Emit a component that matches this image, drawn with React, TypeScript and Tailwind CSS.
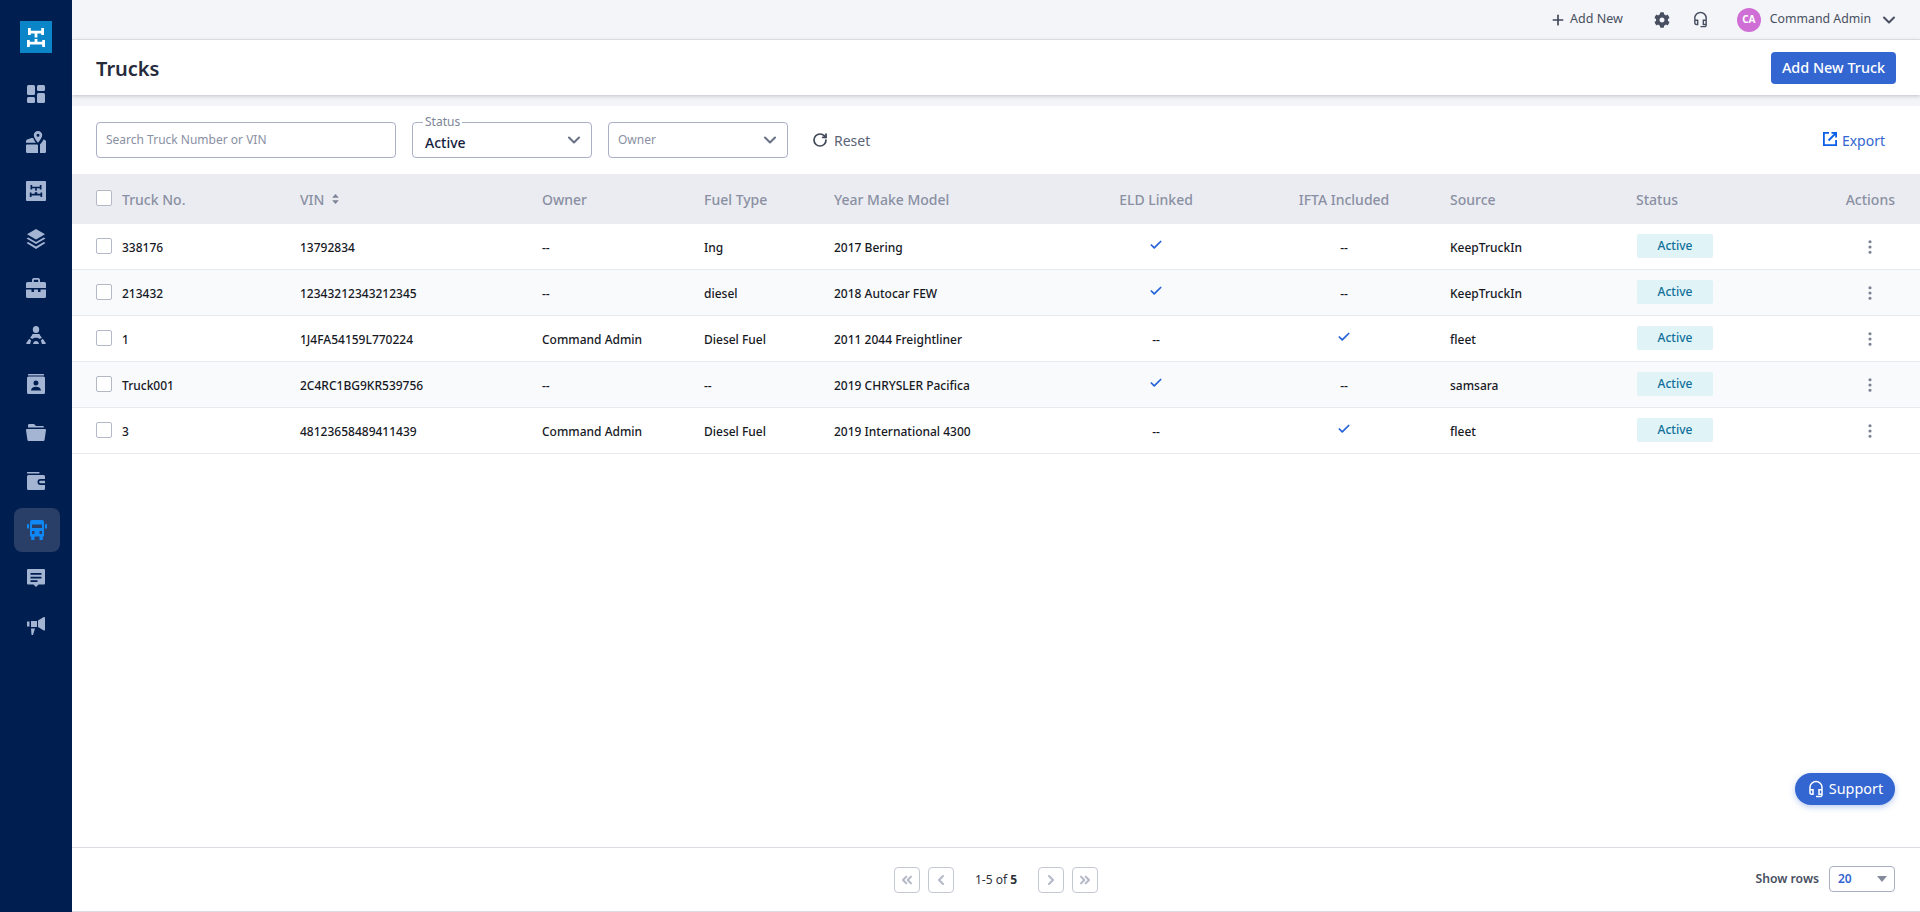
import { Check, ChevronDown, ChevronLeft, ChevronRight, ChevronsLeft, ChevronsRight, EllipsisVertical, Plus, RotateCw } from "lucide-react";
import { FaCog } from "react-icons/fa";
import { MdOutlineHeadsetMic } from "react-icons/md";

const rowGrid = "grid grid-cols-[204px_242px_162px_130px_240px_164px_212px_186px_1fr_50px] items-center pl-[24px] pr-[25px]";

const trucks = [
  { no: "338176", vin: "13792834", owner: "--", fuel: "Ing", model: "2017 Bering", eld: true, ifta: false, source: "KeepTruckIn" },
  { no: "213432", vin: "12343212343212345", owner: "--", fuel: "diesel", model: "2018 Autocar FEW", eld: true, ifta: false, source: "KeepTruckIn" },
  { no: "1", vin: "1J4FA54159L770224", owner: "Command Admin", fuel: "Diesel Fuel", model: "2011 2044 Freightliner", eld: false, ifta: true, source: "fleet" },
  { no: "Truck001", vin: "2C4RC1BG9KR539756", owner: "--", fuel: "--", model: "2019 CHRYSLER Pacifica", eld: true, ifta: false, source: "samsara" },
  { no: "3", vin: "48123658489411439", owner: "Command Admin", fuel: "Diesel Fuel", model: "2019 International 4300", eld: false, ifta: true, source: "fleet" },
];

const Chassis = ({ className }: { className?: string }) => (
  <svg viewBox="0 0 32 32" className={className} fill="currentColor">
    <path d="M8 7h2.800v2.800h10.400V7H24v7h-2.800v-1.600h-3.800v4h-2.800v-4h-3.800V14H8z" />
    <path d="M7 19h2.800v1.800h4.800V18h2.800v2.800h4.800V19H25v7h-2.800v-2.600H9.800V26H7z" />
  </svg>
);

const navIcons = [
  <svg key="dash" viewBox="0 0 18 18" className="w-[18px] h-[18px]" fill="currentColor">
    <rect x="0" y="0" width="8" height="10" rx="1.5" />
    <rect x="10" y="0" width="8" height="6" rx="1.5" />
    <rect x="0" y="12" width="8" height="6" rx="1.5" />
    <rect x="10" y="8" width="8" height="10" rx="1.5" />
  </svg>,
  <svg key="map" viewBox="0 0 20 22" className="w-[20px] h-[22px]" fill="currentColor">
    <path fillRule="evenodd" d="M12 0a4.200 4.200 0 0 1 4.200 4.200c0 2.200-2.400 5.400-4.200 7.600-1.800-2.200-4.200-5.400-4.200-7.600A4.200 4.200 0 0 1 12 0zm0 2.800a1.500 1.500 0 1 0 0 3 1.500 1.500 0 0 0 0-3z" />
    <path d="M5.500 7h1.700c.5 1.500 1.700 3.300 2.800 4.800H0V10.500C0 9.500.6 9 1.300 8.600zM1 13.500h10.300L12 14.300V22H1.200A1.200 1.200 0 0 1 0 20.800v-6.300a1 1 0 0 1 1-1zM18 8.500l1.300.7c.4.200.7.600.7 1.100v10.500a1.200 1.200 0 0 1-1.200 1.200H14v-8.500c1.600-1.800 3-3.700 4-5.500z" />
  </svg>,
  <svg key="chassis" viewBox="0 0 20 20" className="w-[20px] h-[20px]">
    <rect width="20" height="20" rx="1" fill="currentColor" />
    <g fill="#001e50">
      <path d="M4.500 4h1.700v1.700h7.600V4h1.700v4.500h-1.700V7.300h-3v2.400H9.200V7.300h-3v1.200H4.500z" />
      <path d="M3.800 11.500h1.700v1.300h3.200v-1.600h2.600v1.600h3.200v-1.300h1.700V16h-1.700v-1.600h-9V16H3.800z" />
    </g>
  </svg>,
  <svg key="layers" viewBox="0 0 20 20" className="w-[20px] h-[20px]" fill="currentColor">
    <path d="M10 0l9 5.300-9 5.300-9-5.300z" />
    <path d="M2.200 8.500L10 13l7.800-4.500 1.700 1-9.500 5.500L.5 9.500z" />
    <path d="M2.200 13L10 17.500 17.800 13l1.700 1L10 20 .5 14z" />
  </svg>,
  <svg key="brief" viewBox="0 0 20 20" className="w-[20px] h-[20px]" fill="currentColor">
    <path fillRule="evenodd" d="M6 4V2a2 2 0 0 1 2-2h4a2 2 0 0 1 2 2v2h4.500A1.500 1.500 0 0 1 20 5.500V10H0V5.500A1.500 1.500 0 0 1 1.500 4zm1.800 0h4.400V2.200a.4.400 0 0 0-.4-.4H8.200a.4.400 0 0 0-.4.4z" />
    <path d="M0 11.500h5.500V14h2.500v-2.500h4V14h2.500v-2.500H20v7A1.500 1.500 0 0 1 18.500 20h-17A1.500 1.500 0 0 1 0 18.500z" />
  </svg>,
  <svg key="driver" viewBox="0 0 20 20" className="w-[20px] h-[20px]" fill="currentColor">
    <ellipse cx="10" cy="3.500" rx="3.200" ry="3.500" />
    <path d="M6.500 8h7c.6 1.800 1.400 2.600 2.400 3.500l-2 1.600C12.800 12.300 11.400 11.800 10 11.800s-2.800.5-3.900 1.300l-2-1.600C5.100 10.600 5.900 9.800 6.500 8z" />
    <path d="M3.200 12.700l2 1.700C4.600 15.500 4.300 16.800 4.200 18H1c-.5 0-1-.5-.7-1zM16.800 12.700l-2 1.700c.6 1.100.9 2.400 1 3.600H19c.5 0 1-.5.7-1z" />
    <path d="M7 18c.4-1.800 1.500-3 3-3s2.600 1.200 3 3z" />
  </svg>,
  <svg key="contact" viewBox="0 0 18 20" className="w-[18px] h-[20px]" fill="currentColor">
    <rect x="1" y="0" width="16" height="1.500" rx=".5" />
    <path fillRule="evenodd" d="M1.500 2.500h15A1.500 1.500 0 0 1 18 4v14.500a1.500 1.500 0 0 1-1.500 1.500h-15A1.500 1.500 0 0 1 0 18.500V4a1.500 1.500 0 0 1 1.500-1.500zM9 6.500a2.500 2.500 0 1 0 0 5 2.500 2.500 0 0 0 0-5zM4 16.500h10c0-2.200-2.200-3.800-5-3.800s-5 1.600-5 3.800z" />
  </svg>,
  <svg key="folder" viewBox="0 0 20 17" className="w-[20px] h-[17px]" fill="currentColor">
    <path d="M2 3.500V1.300C2 .6 2.600 0 3.300 0h4.200c.4 0 .7.100 1 .4L10 2h6.700c.7 0 1.300.6 1.300 1.300v.2z" />
    <path d="M.9 5h18.200c.6 0 1 .5.900 1.100l-1.400 9.600c-.1.700-.7 1.300-1.400 1.300H2.800c-.7 0-1.300-.6-1.400-1.300L0 6.100C-.1 5.500.3 5 .9 5z" />
  </svg>,
  <svg key="wallet" viewBox="0 0 18 18" className="w-[18px] h-[18px]" fill="currentColor">
    <rect x="0" y="0" width="12.500" height="1.500" rx=".5" />
    <path fillRule="evenodd" d="M1.500 3h15A1.500 1.500 0 0 1 18 4.500V7h-4.500a3 3 0 0 0 0 6H18v3.500a1.500 1.500 0 0 1-1.500 1.500h-15A1.500 1.500 0 0 1 0 16.500v-12A1.500 1.500 0 0 1 1.500 3zM13.500 8.700H18v2.600h-4.500a1.300 1.300 0 0 1 0-2.600z" />
  </svg>,
  <svg key="truck" viewBox="0 0 20 20" className="w-[20px] h-[20px]" fill="currentColor">
    <path fillRule="evenodd" d="M5 0h10a2 2 0 0 1 2 2v14.500h-1.200V20h-3.300v-3.500h-5V20H4.200v-3.500H3V2a2 2 0 0 1 2-2zm0 4.500V8h10V4.500zM5 11v3h2.500v-3zm7.500 0v3H15v-3z" />
    <rect x="0" y="4" width="2" height="4.500" rx=".5" />
    <rect x="18" y="4" width="2" height="4.500" rx=".5" />
  </svg>,
  <svg key="chat" viewBox="0 0 18 18" className="w-[18px] h-[18px]" fill="currentColor">
    <path fillRule="evenodd" d="M1 0h16a1 1 0 0 1 1 1v13.500a1 1 0 0 1-1 1h-5.500L9 18l-2.500-2.500H1a1 1 0 0 1-1-1V1a1 1 0 0 1 1-1zm2.500 4v1.700h11V4zm0 3.700v1.700h11V7.700zm0 3.600V13h7v-1.700z" />
  </svg>,
  <svg key="mega" viewBox="0 0 18 18" className="w-[18px] h-[18px]" fill="currentColor">
    <path d="M17 0c.6 0 1 .4 1 1v11.500c0 .6-.4 1-1 1-.2 0-.4-.1-.6-.2L11 10V3.500L16.400.2C16.600.1 16.800 0 17 0z" />
    <path d="M4 4h6v6H4z" />
    <path d="M0 4.500h2.500v5H0z" />
    <path d="M4 11.500h4L6 18H4.500z" />
  </svg>,
];

const Select = ({ label, value }: { label?: string; value?: string }) => (
  <div className="relative flex items-center justify-between w-[180px] h-[36px] border border-[#a9b0c4] rounded-[4px] pl-[9px] pr-[7px]">
    {label && (
      <span className="absolute left-[10px] top-[-8px] bg-white px-[2px] text-[12px] leading-[14px] text-[#7d8497]">{label}</span>
    )}
    {value ? (
      <span className="pl-[3px] pt-[4px] text-[14px] font-medium text-[#14213d]">{value}</span>
    ) : (
      <span className="text-[12px] text-[#8a90a3]">Owner</span>
    )}
    <ChevronDown className="w-[20px] h-[20px] text-[#687085]" strokeWidth={2.400} />
  </div>
);

const PageBtn = ({ children }: { children: React.ReactNode }) => (
  <button className="flex items-center justify-center w-[26px] h-[26px] border border-[#c5c9d4] rounded-[4px] text-[#b3b8c6]">
    {children}
  </button>
);

export default function App() {
  return (
    <div className="flex h-screen w-full overflow-hidden bg-white font-['Noto_Sans',sans-serif]">
      <aside className="w-[72px] shrink-0 bg-[#001e50] flex flex-col">
        <div className="mt-[21px] ml-[20px] w-[32px] h-[32px] bg-[#0a85c7] text-white">
          <Chassis className="w-[32px] h-[32px]" />
        </div>
        <nav className="mt-[19px] flex flex-col gap-[4.400px] items-center">
          {navIcons.map((icon, i) => (
            <div
              key={i}
              className={
                i === 9
                  ? "w-[46px] h-[44px] ml-[2px] rounded-[8px] bg-[#2a3f68] text-[#0f87f5] flex items-center justify-center"
                  : "w-[46px] h-[44px] text-[#a4b5d4] flex items-center justify-center"
              }
            >
              {icon}
            </div>
          ))}
        </nav>
      </aside>

      <main className="relative flex-1 min-w-0 flex flex-col">
        <div className="h-[40px] shrink-0 bg-[#f4f5f8] border-b border-[#e5e7ec] flex items-center justify-end pr-[21px] text-[#474f61]">
          <Plus className="w-[16px] h-[16px] text-[#3f4759]" strokeWidth={2.500} />
          <span className="ml-[4px] text-[12.500px]">Add New</span>
          <FaCog className="ml-[31px] w-[16px] h-[16px] text-[#474f61]" />
          <MdOutlineHeadsetMic className="ml-[22px] w-[17px] h-[17px] text-[#474f61]" />
          <span className="ml-[28px] w-[24px] h-[24px] rounded-full bg-[#cf6fd6] text-white text-[10px] font-bold flex items-center justify-center">CA</span>
          <span className="ml-[9px] text-[12.300px]">Command Admin</span>
          <ChevronDown className="ml-[8px] w-[20px] h-[20px]" strokeWidth={2.400} />
        </div>

        <div className="relative z-10 h-[55px] shrink-0 bg-white shadow-[0_1px_4px_rgba(30,40,70,0.25)] flex items-center justify-between pl-[24px] pr-[24px]">
          <h1 className="text-[20px] font-semibold text-[#252b3b] mt-[2px]">Trucks</h1>
          <button className="w-[125px] h-[32px] rounded-[4px] bg-[#3366d0] text-white text-[14.400px] font-medium">Add New Truck</button>
        </div>
        <div className="h-[11px] shrink-0 bg-[#f3f4f7]" />

        <div className="h-[68px] shrink-0 flex items-center pl-[24px] pr-[35px]">
          <div className="w-[300px] h-[36px] border border-[#a9b0c4] rounded-[4px] flex items-center pl-[9px] text-[12px] text-[#8a90a3]">
            Search Truck Number or VIN
          </div>
          <div className="ml-[16px]">
            <Select label="Status" value="Active" />
          </div>
          <div className="ml-[16px]">
            <Select />
          </div>
          <RotateCw className="ml-[24px] w-[16px] h-[16px] text-[#3f4759]" strokeWidth={2.600} />
          <span className="ml-[6px] text-[14px] text-[#5b6477]">Reset</span>
          <div className="ml-auto flex items-center gap-[5px] text-[#3366d0]">
            <svg viewBox="0 0 14 14" className="w-[14px] h-[14px] -mt-[3px]" fill="none" stroke="#0b5fe8" strokeWidth="1.800">
              <path d="M6 .9H.9v12.200h12.200V8" />
              <path d="M5.500 8.500L12.500 1.500M8.500 .9h4.600v4.600" />
            </svg>
            <span className="text-[14px]">Export</span>
          </div>
        </div>

        <div className={`${rowGrid} h-[50px] shrink-0 bg-[#ebecf1] text-[14px] font-medium text-[#8a90a3]`}>
          <div className="flex items-center">
            <span className="w-[16px] h-[16px] -mt-[2px] rounded-[2px] border border-[#b5b9c7] bg-white" />
            <span className="ml-[10px] mt-[1px]">Truck No.</span>
          </div>
          <div className="flex items-center gap-[8px]">
            VIN
            <svg viewBox="0 0 8 12" className="w-[7px] h-[10px]" fill="#7d8497">
              <path d="M4 0l4 4.500H0zM4 12L0 7.500h8z" />
            </svg>
          </div>
          <div>Owner</div>
          <div>Fuel Type</div>
          <div>Year Make Model</div>
          <div className="text-center">ELD Linked</div>
          <div className="text-center">IFTA Included</div>
          <div>Source</div>
          <div>Status</div>
          <div className="text-right whitespace-nowrap">Actions</div>
        </div>

        {trucks.map((t, i) => (
          <div
            key={t.no}
            className={`${rowGrid} h-[46px] shrink-0 pt-[2px] border-b border-[#e8e9ee] text-[12px] font-medium text-[#16191f] ${i % 2 === 1 ? "bg-[#f9fafc]" : "bg-white"}`}
          >
            <div className="flex items-center">
              <span className="w-[16px] h-[16px] -mt-[4px] rounded-[2px] border border-[#b5b9c7] bg-white" />
              <span className="ml-[10px]">{t.no}</span>
            </div>
            <div>{t.vin}</div>
            <div>{t.owner}</div>
            <div>{t.fuel}</div>
            <div>{t.model}</div>
            <div className="flex justify-center">
              {t.eld ? <Check className="w-[14px] h-[14px] -mt-[6px] text-[#2563d9]" strokeWidth={3} /> : "--"}
            </div>
            <div className="flex justify-center">
              {t.ifta ? <Check className="w-[14px] h-[14px] -mt-[6px] text-[#2563d9]" strokeWidth={3} /> : "--"}
            </div>
            <div>{t.source}</div>
            <div>
              <span className="flex items-center justify-center w-[76px] h-[24px] ml-[1px] -mt-[4px] rounded-[2px] bg-[#e0f3f6] text-[#0f6f9a]">Active</span>
            </div>
            <div className="flex justify-center -mt-[2px]">
              <EllipsisVertical className="w-[18px] h-[18px] text-[#7a8291]" strokeWidth={2.200} />
            </div>
          </div>
        ))}

        <div className="flex-1" />

        <button className="absolute right-[25px] bottom-[107px] flex items-center justify-center gap-[4px] w-[100px] h-[32px] rounded-full bg-[#3366d0] text-white text-[14.400px] shadow-[0_2px_6px_rgba(51,102,208,0.35)]">
          <MdOutlineHeadsetMic className="w-[18px] h-[18px]" />
          Support
        </button>

        <div className="relative h-[65px] shrink-0 border-t border-b border-[#dcdde2] flex items-center justify-center">
          <div className="flex items-center">
            <PageBtn><ChevronsLeft className="w-[16px] h-[16px]" strokeWidth={3} /></PageBtn>
            <span className="w-[8px]" />
            <PageBtn><ChevronLeft className="w-[16px] h-[16px]" strokeWidth={3} /></PageBtn>
            <span className="w-[84px] text-center text-[12px] text-[#2a2f3a]">1-5 of <b className="font-bold">5</b></span>
            <PageBtn><ChevronRight className="w-[16px] h-[16px]" strokeWidth={3} /></PageBtn>
            <span className="w-[8px]" />
            <PageBtn><ChevronsRight className="w-[16px] h-[16px]" strokeWidth={3} /></PageBtn>
          </div>
          <div className="absolute right-[25px] top-[18px] flex items-center gap-[10px]">
            <span className="text-[12.200px] font-semibold text-[#474f61]">Show rows</span>
            <div className="w-[66px] h-[26px] border border-[#a9b0c4] rounded-[4px] flex items-center justify-between pl-[8px] pr-[7px]">
              <span className="text-[12px] font-semibold text-[#3366d0]">20</span>
              <svg viewBox="0 0 10 6" className="w-[10px] h-[6px]" fill="#858b9c"><path d="M0 0h10L5 6z" /></svg>
            </div>
          </div>
        </div>
      </main>
    </div>
  );
}
